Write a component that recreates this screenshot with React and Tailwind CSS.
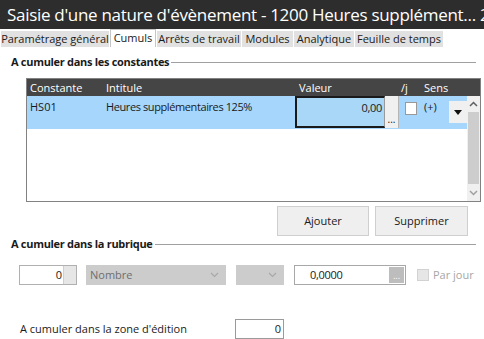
import React from 'react';

const FONT = { fontFamily: '"Open Sans", "Noto Sans", sans-serif' };

const tabs = [
  { label: 'Paramétrage général', w: 'w-[108px]' },
  { label: 'Cumuls', w: 'w-[46px]', active: true },
  { label: 'Arrêts de travail', w: 'w-[84px]' },
  { label: 'Modules', w: 'w-[51px]' },
  { label: 'Analytique', w: 'w-[60px]' },
  { label: 'Feuille de temps', w: 'w-[88px]' },
];

function SectionTitle({ children, className = '' }) {
  return (
    <div className={`flex items-center pl-[11px] pr-[8px] ${className}`}>
      <span className="text-[11px] font-bold tracking-[-0.3px] text-[#1a1a1a] whitespace-nowrap pr-[2px]">{children}</span>
      <div className="flex-1 h-px bg-[#a0a0a0]" />
    </div>
  );
}

export default function App() {
  return (
    <div className="w-[484px] h-[339px] bg-white overflow-hidden text-[#1a1a1a]" style={FONT}>
      {/* Title bar */}
      <div className="h-[29px] bg-[#2d2d2d] text-white text-[17px] tracking-[-0.3px] leading-[29px] pl-[7px] whitespace-nowrap overflow-hidden">
        Saisie d'une nature d'évènement - 1200 Heures supplément... 2
      </div>

      {/* Tabs */}
      <div className="h-[18px] flex items-end gap-[1px] pl-[1px]">
        {tabs.map((t) =>
          t.active ? (
            <div key={t.label} className={`${t.w} h-[18px] bg-white border border-b-0 border-[#c5c5c5] text-[11px] leading-[16px] text-center whitespace-nowrap`}>
              {t.label}
            </div>
          ) : (
            <div key={t.label} className={`${t.w} h-[16px] bg-[#e1e1e1] text-[11px] leading-[16px] text-center whitespace-nowrap`}>
              {t.label}
            </div>
          )
        )}
      </div>

      {/* Constantes */}
      <SectionTitle className="mt-[8px] h-[14px]">A cumuler dans les constantes</SectionTitle>

      <div className="ml-[26px] mt-[9px] w-[455px] h-[124px] border border-[#828282] flex flex-col">
        <div className="h-[17px] bg-[#454545] text-white text-[11px] leading-[17px] flex shrink-0">
          <div className="w-[76px] pl-[3px]">Constante</div>
          <div className="w-[193px] pl-[3px]">Intitule</div>
          <div className="w-[103px] pl-[3px]">Valeur</div>
          <div className="w-[24px] pl-[2px]">/j</div>
          <div className="pl-[1px]">Sens</div>
        </div>
        <div className="flex flex-1 min-h-0">
          <div className="flex-1">
            <div className="h-[33px] bg-[#a6d6fb] flex items-start text-[11px]">
              <div className="w-[76px] pl-[3px] pt-[3px]">HS01</div>
              <div className="w-[192px] pl-[3px] pt-[3px] whitespace-nowrap tracking-[-0.4px]">Heures supplémentaires 125%</div>
              <div className="w-[90px] h-[32px] border-2 border-r border-[#1a1a1a] border-r-[#9a9a9a] bg-[#a9d7f7] text-right pr-[2px] pt-[2px] tracking-[-0.3px]">0,00</div>
              <div className="w-[14px] h-[32px] bg-[#f0f0f0] border-r border-[#b5b5b5] text-[10px] leading-none flex items-end justify-center pb-[4px]">...</div>
              <div className="w-[12px] h-[13px] bg-white border border-[#999] ml-[6px] mt-[6px]" />
              <div className="w-[31px] pl-[7px] pt-[3px]">(+)</div>
              <div className="w-[18px] h-[22px] bg-[#f0f0f0] ml-[1px] mt-[5px] flex items-center justify-center">
                <svg width="8" height="5" viewBox="0 0 8 5"><path d="M0 0h8L4 5z" fill="#111" /></svg>
              </div>
            </div>
          </div>
          <div className="w-[15px] bg-[#f0f0f0] flex flex-col">
            <div className="h-[16px] flex items-center justify-center">
              <svg width="9" height="6" viewBox="0 0 9 6"><path d="M1 5l3.5-3.5L8 5" stroke="#606060" strokeWidth="1.5" fill="none" /></svg>
            </div>
            <div className="flex-1 mx-[1px] bg-[#cdcdcd]" />
            <div className="h-[17px] flex items-center justify-center">
              <svg width="9" height="6" viewBox="0 0 9 6"><path d="M1 1l3.5 3.5L8 1" stroke="#a0a0a0" strokeWidth="1.5" fill="none" /></svg>
            </div>
          </div>
        </div>
      </div>

      <div className="flex justify-end gap-[6px] pr-[16px] mt-[4px]">
        <button className="w-[92px] h-[30px] bg-[#efefef] border border-[#cfcfcf] text-[11px]">Ajouter</button>
        <button className="w-[93px] h-[30px] bg-[#efefef] border border-[#cfcfcf] text-[11px]">Supprimer</button>
      </div>

      {/* Rubrique */}
      <SectionTitle className="mt-[1px] h-[14px]">A cumuler dans la rubrique</SectionTitle>

      <div className="flex items-center mt-[14px] pl-[19px] h-[20px] text-[11px]">
        <div className="w-[58px] h-[20px] border border-[#b0b0b0] bg-white flex items-stretch">
          <div className="flex-1 text-right pr-[1px] leading-[18px]">0</div>
          <div className="w-[13px] bg-[#e6e6e6] border-l border-[#cfcfcf]" />
        </div>
        <div className="w-[140px] h-[20px] ml-[9px] bg-[#cccccc] text-[#6e6e6e] flex items-center pl-[4px] pr-[7px]">
          <span className="flex-1">Nombre</span>
          <svg width="9" height="6" viewBox="0 0 9 6"><path d="M1 1l3.5 3.5L8 1" stroke="#a8a8a8" strokeWidth="1.2" fill="none" /></svg>
        </div>
        <div className="w-[48px] h-[20px] ml-[10px] bg-[#cccccc] flex items-center justify-end pr-[7px]">
          <svg width="9" height="6" viewBox="0 0 9 6"><path d="M1 1l3.5 3.5L8 1" stroke="#a8a8a8" strokeWidth="1.2" fill="none" /></svg>
        </div>
        <div className="w-[112px] h-[20px] ml-[10px] border border-[#a8a8a8] bg-white flex items-stretch">
          <div className="flex-1 pl-[15px] leading-[18px] tracking-[-0.3px]">0,0000</div>
          <div className="w-[15px] my-[1px] mr-[1px] bg-[#bdbdbd] text-white text-[9px] leading-none flex items-end justify-center pb-[3px]">...</div>
        </div>
        <div className="w-[12px] h-[12px] ml-[11px] bg-[#e6e6e6] border border-[#d2d2d2]" />
        <span className="ml-[4px] text-[#a6a6a6]">Par jour</span>
      </div>

      <div className="flex items-center mt-[34px] pl-[20px] h-[20px] text-[11px]">
        <span className="w-[215px]">A cumuler dans la zone d'édition</span>
        <div className="w-[49px] h-[20px] border border-[#9a9a9a] bg-white text-right pr-[2px] leading-[18px]">0</div>
      </div>
    </div>
  );
}
